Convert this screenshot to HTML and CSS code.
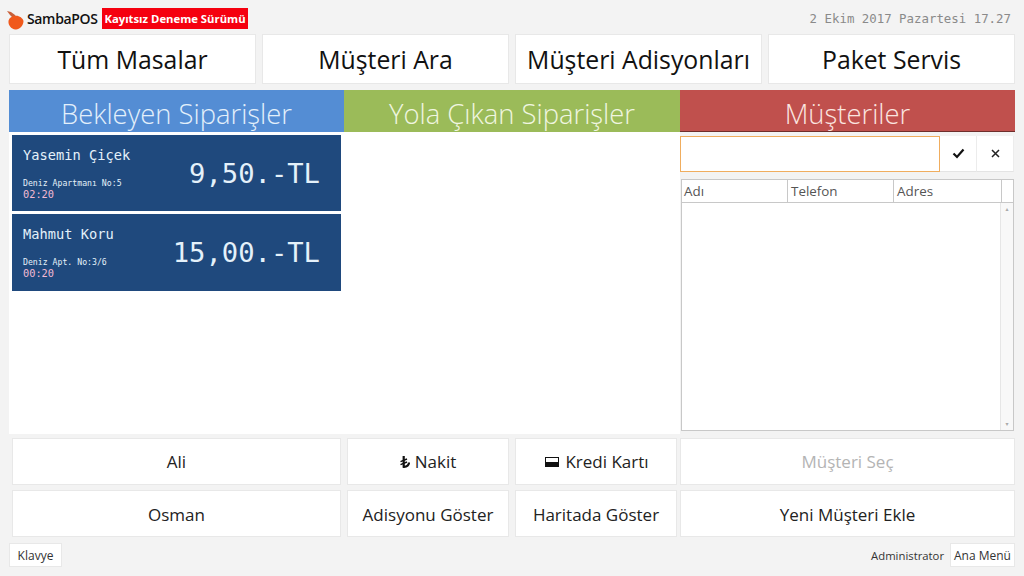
FILE: index.html
```html
<html>

<head>
	<title>SambaPOS</title>
	<meta charset="utf-8">
	<link rel="stylesheet" href="styles.css">
</head>

<body>
	<div class="topbar">
		<div class="brand">
			<svg class="logo" width="17" height="19" viewBox="0 0 17 19">
				<path d="M0 0 L4 1 L8 4 L10 7 L6 7 L3 4 Z" fill="#c8603a"/>
				<path d="M8 5 C11 4 16 7 16.5 10 C16.5 15 12 19 8.5 18.5 C4 18 1 14 1.5 10 C2 7 5 5 8 5 Z" fill="#f0591c"/>
			</svg>
			<span class="brand-name">SambaPOS</span>
			<span class="badge">Kayıtsız Deneme Sürümü</span>
		</div>
		<div class="clock">2 Ekim 2017 Pazartesi 17.27</div>
	</div>

	<div class="nav">
		<div class="btn">Tüm Masalar</div>
		<div class="btn">Müşteri Ara</div>
		<div class="btn">Müşteri Adisyonları</div>
		<div class="btn">Paket Servis</div>
	</div>

	<div class="bands">
		<div class="band band-blue">Bekleyen Siparişler</div>
		<div class="band band-green">Yola Çıkan Siparişler</div>
		<div class="band band-red">Müşteriler</div>
	</div>

	<div class="content">
		<div class="orders">
			<div class="card">
				<div class="card-info">
					<div class="card-name">Yasemin Çiçek</div>
					<div class="card-address">Deniz Apartmanı No:5</div>
					<div class="card-time">02:20</div>
				</div>
				<div class="card-total">9,50.-TL</div>
			</div>
			<div class="card">
				<div class="card-info">
					<div class="card-name">Mahmut Koru</div>
					<div class="card-address">Deniz Apt. No:3/6</div>
					<div class="card-time">00:20</div>
				</div>
				<div class="card-total">15,00.-TL</div>
			</div>
		</div>

		<div class="customers">
			<div class="search">
				<input class="search-input" type="text">
				<div class="icon-btn">
					<svg width="13" height="11" viewBox="0 0 13 11"><path d="M1.5 5.5 L5 9 L11.5 1.5" fill="none" stroke="#111" stroke-width="2.2"/></svg>
				</div>
				<div class="icon-btn">
					<svg width="9" height="9" viewBox="0 0 9 9"><path d="M1 1 L8 8 M8 1 L1 8" fill="none" stroke="#222" stroke-width="1.5"/></svg>
				</div>
			</div>
			<div class="grid">
				<div class="grid-head">
					<div class="grid-col">Adı</div>
					<div class="grid-col">Telefon</div>
					<div class="grid-col">Adres</div>
					<div class="grid-corner"></div>
				</div>
				<div class="grid-body">
					<div class="grid-rows"></div>
					<div class="scrollbar">
						<span class="arrow">▴</span>
						<span class="arrow">▾</span>
					</div>
				</div>
			</div>
		</div>
	</div>

	<div class="actions">
		<div class="actions-left">
			<div class="btn btn-md">Ali</div>
			<div class="btn btn-md">
				<svg class="lira" width="10" height="12" viewBox="0 0 10 12">
					<path d="M3.7 0 V10.8 C7 11 9 9 9 6.5" fill="none" stroke="#111" stroke-width="2.2"/>
					<path d="M0.5 5.6 L7 3 M0.5 8.6 L7 6" fill="none" stroke="#111" stroke-width="1.5"/>
				</svg>
				Nakit
			</div>
			<div class="btn btn-md btn-card"><span class="card-icon"></span>Kredi Kartı</div>
			<div class="btn btn-md btn-low">Osman</div>
			<div class="btn btn-md btn-low">Adisyonu Göster</div>
			<div class="btn btn-md btn-low">Haritada Göster</div>
		</div>
		<div class="actions-right">
			<div class="btn btn-md btn-disabled">Müşteri Seç</div>
			<div class="btn btn-md btn-low">Yeni Müşteri Ekle</div>
		</div>
	</div>

	<div class="footer">
		<div class="btn btn-sm btn-keys">Klavye</div>
		<div class="user">
			<span class="user-name">Administrator</span>
			<div class="btn btn-sm btn-menu">Ana Menü</div>
		</div>
	</div>
</body>

</html>
```

FILE: styles.css
```css
html, body {
	margin: 0;
	padding: 0;
	height: 576px;
	overflow: hidden;
}

body {
	background-color: #f3f3f3;
	font-family: "Open Sans", "Noto Sans", sans-serif;
	color: #1a1a1a;
}

.topbar {
	height: 34px;
	display: flex;
	justify-content: space-between;
	align-items: flex-start;
	padding: 8px 13px 0 7px;
	box-sizing: border-box;
}

.brand {
	display: flex;
	align-items: center;
	height: 21px;
}

.logo {
	margin-top: 3px;
	flex: none;
}

.brand-name {
	font-size: 14px;
	font-weight: 600;
	letter-spacing: -0.35px;
	margin-left: 3px;
	color: #111;
	width: 75px;
}

.badge {
	background-color: #f5000f;
	color: #fff;
	font-size: 11.3px;
	font-weight: 700;
	line-height: 21px;
	width: 146px;
	text-align: center;
	white-space: nowrap;
}

.clock {
	font-family: "DejaVu Sans Mono", monospace;
	font-size: 12.4px;
	line-height: 21px;
	color: #8a8a8a;
}

.btn {
	background-color: #fff;
	border: 1px solid #e8e8e8;
	box-sizing: border-box;
	display: flex;
	align-items: center;
	justify-content: center;
	white-space: nowrap;
}

.nav {
	display: grid;
	grid-template-columns: repeat(4, 247px);
	column-gap: 6px;
	height: 50px;
	margin-left: 9px;
	font-size: 24.8px;
	color: #111;
}

.bands {
	display: grid;
	grid-template-columns: 335px 336px 335px;
	height: 42px;
	margin: 6px 0 0 9px;
}

.band {
	font-size: 27.4px;
	font-weight: 300;
	line-height: 47px;
	height: 42px;
	overflow: hidden;
	text-align: center;
	box-sizing: border-box;
}

.band-blue {
	background-color: #548dd4;
	color: #e3f0fb;
}

.band-green {
	background-color: #9bbb59;
	color: #f0f6e0;
}

.band-red {
	background-color: #c0504d;
	color: #fbe6e0;
	border-bottom: 1px solid #6e2e2c;
}

.content {
	display: flex;
	height: 302px;
	margin-left: 9px;
}

.orders {
	width: 671px;
	background-color: #fff;
	padding: 3px;
	box-sizing: border-box;
	display: grid;
	grid-template-columns: 329px;
	grid-template-rows: 76px 77px;
	row-gap: 3px;
	align-content: start;
}

.card {
	background-color: #1f497d;
	color: #e4f1fa;
	display: flex;
	justify-content: space-between;
	font-family: "DejaVu Sans Mono", monospace;
	box-sizing: border-box;
	padding: 0 21px 0 11px;
}

.card-name {
	font-size: 13.7px;
	line-height: 16px;
	margin-top: 12px;
}

.card-address {
	font-size: 8.2px;
	line-height: 10px;
	margin-top: 15px;
}

.card-time {
	font-size: 10.3px;
	line-height: 12px;
	color: #f3b9d2;
}

.card-total {
	font-size: 27.2px;
	line-height: 32px;
	margin-top: 23px;
}

.customers {
	width: 335px;
	display: flex;
	flex-direction: column;
}

.search {
	display: flex;
	height: 36px;
	margin-top: 4px;
	padding-right: 1px;
}

.search-input {
	width: 260px;
	height: 36px;
	box-sizing: border-box;
	border: 1px solid #f0ad5e;
	background-color: #fff;
	padding: 0;
	margin: 0;
	outline: none;
}

.icon-btn {
	width: 37px;
	height: 36px;
	background-color: #fff;
	border-right: 1px solid #ececec;
	border-bottom: 1px solid #e4e4e4;
	box-sizing: border-box;
	display: flex;
	align-items: center;
	justify-content: center;
}

.grid {
	margin: 7px 1px 0 1px;
	height: 252px;
	border: 1px solid #c8c8c8;
	box-sizing: border-box;
	background-color: #fff;
	display: flex;
	flex-direction: column;
}

.grid-head {
	display: grid;
	grid-template-columns: 106px 106px 108px 1fr;
	height: 23px;
	border-bottom: 1px solid #c8c8c8;
	box-sizing: border-box;
	flex: none;
}

.grid-col {
	font-size: 13.4px;
	line-height: 22px;
	padding-left: 2px;
	color: #555;
	border-right: 1px solid #c8c8c8;
}

.grid-col + .grid-col {
	padding-left: 3px;
}

.grid-body {
	flex: 1;
	display: flex;
}

.grid-rows {
	flex: 1;
}

.scrollbar {
	width: 12px;
	background-color: #f8f8f8;
	border-left: 1px solid #e6e6e6;
	display: flex;
	flex-direction: column;
	justify-content: space-between;
	align-items: center;
}

.arrow {
	font-family: "DejaVu Sans", sans-serif;
	font-size: 6px;
	line-height: 12px;
	color: #aaa;
}

.actions {
	display: flex;
	margin: 4px 0 0 12px;
	font-size: 17px;
	color: #222;
}

.actions-left {
	display: grid;
	grid-template-columns: 329px 162px 162px;
	grid-template-rows: 47px 47px;
	gap: 5px 6px;
}

.actions-right {
	display: grid;
	grid-template-columns: 335px;
	grid-template-rows: 47px 47px;
	row-gap: 5px;
	margin-left: 3px;
}

.btn-low {
	padding-top: 2px;
}

.btn-card {
	padding-left: 2px;
}

.btn-disabled {
	color: #b4b4b4;
}

.lira {
	margin-right: 5px;
	flex: none;
}

.card-icon {
	width: 14px;
	height: 10px;
	margin-right: 6px;
	border: 1px solid #111;
	border-bottom-width: 5px;
	box-sizing: border-box;
}

.footer {
	display: flex;
	justify-content: space-between;
	align-items: center;
	margin: 6px 9px 0 9px;
	height: 24px;
	font-size: 12px;
	color: #333;
}

.btn-sm {
	height: 24px;
}

.btn-keys {
	width: 53px;
}

.btn-menu {
	width: 65px;
}

.user {
	display: flex;
	align-items: center;
	gap: 6px;
}

.user-name {
	font-size: 11.3px;
}
```
